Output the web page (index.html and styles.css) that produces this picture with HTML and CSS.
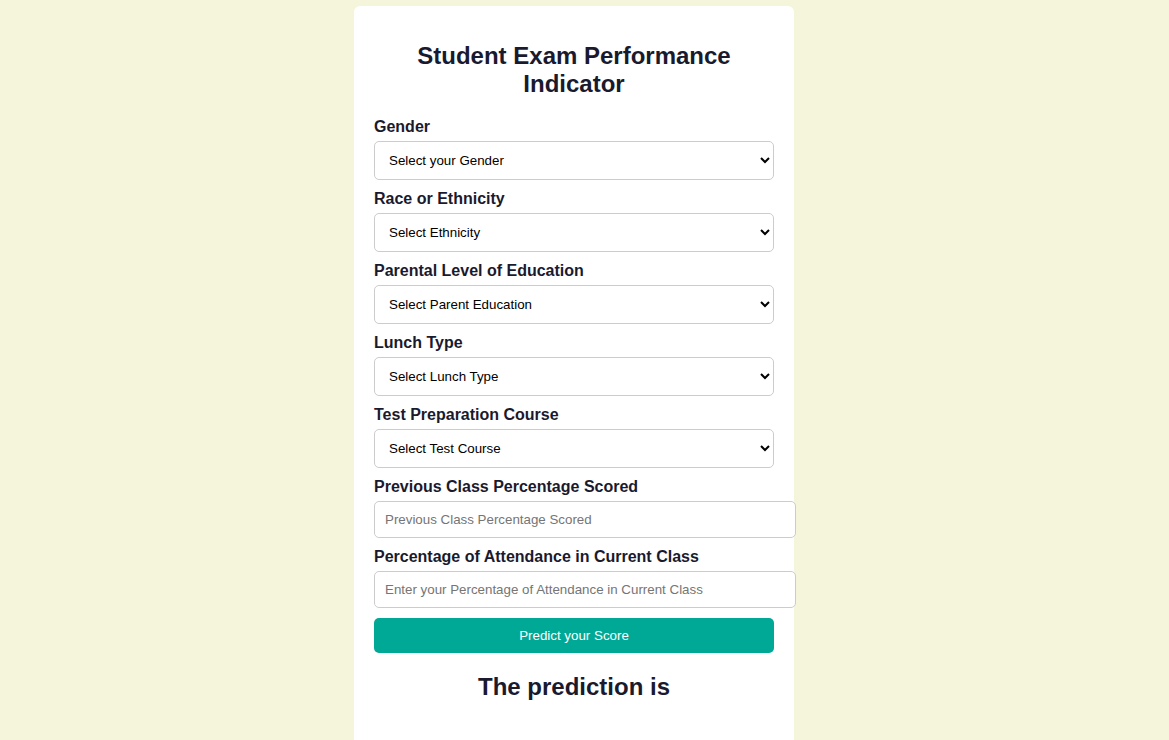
FILE: index.html
```html
<!DOCTYPE html>
<html lang="en">
<head>
<meta charset="utf-8">
<title>Student Exam Performance Indicator</title>
<link rel="stylesheet" href="styles.css">
</head>
<body>
<div class="card">
  <h1 class="title">Student Exam Performance Indicator</h1>
  <form class="form">
    <div class="group">
      <label class="label">Gender</label>
      <select class="field select"><option>Select your Gender</option><option>Male</option><option>Female</option></select>
    </div>
    <div class="group">
      <label class="label">Race or Ethnicity</label>
      <select class="field select"><option>Select Ethnicity</option></select>
    </div>
    <div class="group">
      <label class="label">Parental Level of Education</label>
      <select class="field select"><option>Select Parent Education</option></select>
    </div>
    <div class="group">
      <label class="label">Lunch Type</label>
      <select class="field select"><option>Select Lunch Type</option></select>
    </div>
    <div class="group">
      <label class="label">Test Preparation Course</label>
      <select class="field select"><option>Select Test Course</option></select>
    </div>
    <div class="group">
      <label class="label">Previous Class Percentage Scored</label>
      <input class="field input" type="number" placeholder="Previous Class Percentage Scored">
    </div>
    <div class="group">
      <label class="label">Percentage of Attendance in Current Class</label>
      <input class="field input" type="number" placeholder="Enter your Percentage of Attendance in Current Class">
    </div>
    <button class="btn" type="button">Predict your Score</button>
  </form>
  <h2 class="result">The prediction is</h2>
</div>
</body>
</html>
```
FILE: styles.css
```css
html, body {
  margin: 0;
  padding: 0;
}
body {
  background: #f5f5dc;
  font-family: "Liberation Sans", Arial, sans-serif;
  color: #1a1a2e;
  height: 740px;
  overflow: hidden;
}
.card {
  box-sizing: border-box;
  width: 440px;
  margin: 6px 0 0 calc(50% - 230.5px);
  background: #ffffff;
  border-radius: 6px;
  padding: 20px 20px 40px;
  min-height: 760px;
}
.title {
  font-size: 24px;
  line-height: 28px;
  font-weight: bold;
  text-align: center;
  margin: 16px 0 20px;
}
.form {
  margin: 0;
}
.group {
  margin-bottom: 10px;
}
.label {
  display: block;
  font-size: 16px;
  line-height: 18px;
  font-weight: bold;
  margin-bottom: 5px;
}
.field {
  font-family: "Liberation Sans", Arial, sans-serif;
  font-size: 13.33px;
  border: 1px solid #cccccc;
  border-radius: 5px;
  background: #ffffff;
  color: #000;
}
.select {
  display: block;
  box-sizing: border-box;
  width: 100%;
  height: 39px;
  padding: 0 10px;
}
.input {
  display: block;
  width: 100%;
  height: 17px;
  padding: 9px 10px;
  outline: none;
}
.input::placeholder {
  color: #757575;
}
.btn {
  display: block;
  width: 100%;
  height: 35px;
  margin: 0;
  border: none;
  border-radius: 5px;
  background: #00a896;
  color: #ffffff;
  font-family: "Liberation Sans", Arial, sans-serif;
  font-size: 13.33px;
  cursor: pointer;
}
.result {
  font-size: 24px;
  line-height: 28px;
  font-weight: bold;
  text-align: center;
  margin: 20px 0 0;
}
```
